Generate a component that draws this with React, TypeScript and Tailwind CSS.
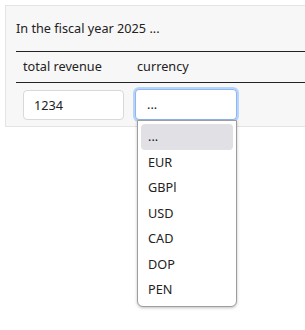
import React from "react";

const currencies = ["...", "EUR", "GBPl", "USD", "CAD", "DOP", "PEN"];

const App = () => {
  return (
    <div className="w-[305px] h-[330px] bg-white pt-[5px] pl-[5px] overflow-hidden text-[#222] text-[12.7px] font-['Noto_Sans',sans-serif]">
      <div className="w-[320px] bg-[#f7f7f7] border border-[#e4e4e4] pl-[10px] pt-[12px] pb-[6px]">
        <p className="leading-[20px] mb-[13px]">In the fiscal year 2025 ...</p>

        <div className="border-t border-[#222]">
          {/* header */}
          <div className="flex h-[31px] items-center border-b border-[#222]">
            <div className="w-[112px] pl-[7px]">total revenue</div>
            <div className="pl-[9px]">currency</div>
          </div>

          {/* row */}
          <div className="flex pt-[6px]">
            <div className="w-[112px] pl-[7px]">
              <input
                type="text"
                defaultValue="1234"
                className="w-[101px] h-[30px] mt-[1px] px-[10px] bg-white border border-[#d9d9d9] rounded-[4px] outline-none"
              />
            </div>
            <div className="relative pl-[7px]">
              <div className="w-[102px] h-[31px] flex items-center pl-[11px] bg-white border border-[#8cb8f0] rounded-[4px] ring-2 ring-[#b7d3fb]">
                ...
              </div>
              <div className="absolute left-[9px] top-[31px] w-[100px] z-10 bg-white border border-[#9e9e9e] rounded-b-[6px] shadow-[0_1px_3px_rgba(0,0,0,0.25)] p-[3px]">
                {currencies.map((c, i) => (
                  <div
                    key={c}
                    className={
                      "h-[25.5px] flex items-center pl-[7px] rounded-[4px] " +
                      (i === 0 ? "bg-[#e1e0e5]" : "")
                    }
                  >
                    {c}
                  </div>
                ))}
              </div>
            </div>
          </div>
        </div>
      </div>
    </div>
  );
};

export default App;
